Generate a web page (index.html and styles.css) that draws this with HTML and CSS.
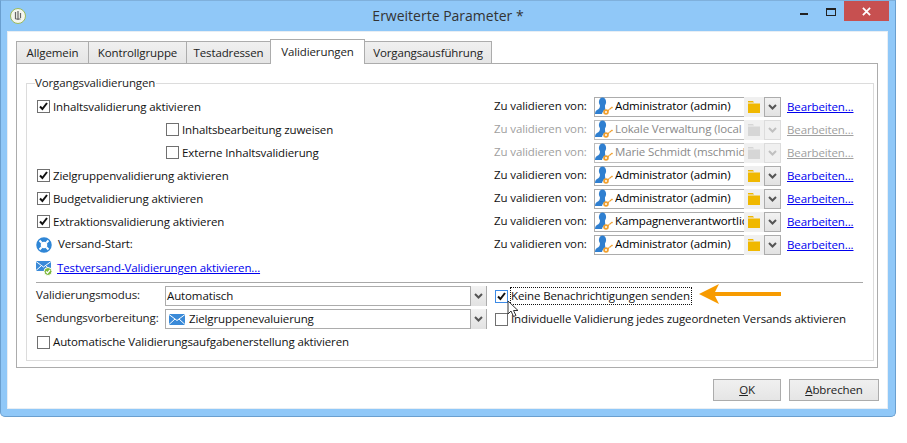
FILE: index.html
```html
<!DOCTYPE html>
<html lang="de">
<head>
<meta charset="utf-8">
<title>Erweiterte Parameter</title>
<link rel="stylesheet" href="styles.css">
</head>
<body>
<svg class="defs" width="0" height="0" aria-hidden="true">
  <defs>
    <symbol id="userkey" viewBox="0 0 18 19">
      <ellipse cx="7.5" cy="5" rx="3.6" ry="4.6" fill="#2f7fd0"/>
      <path d="M5 8 C5 11 4 12 2 13 C0.5 14 0 15.5 0 17 L7 17 C7.5 15 8.5 13.5 10.5 12.5 C10 11 10 10 10 8 Z" fill="#2f7fd0"/>
      <circle cx="11" cy="15" r="2.8" fill="#f0a030"/>
      <circle cx="11" cy="15" r="1" fill="#fff"/>
      <path d="M12.5 13.3 L17 9.5 L18 10.5 L17 11.5 L16.4 11.2 L15.6 12.4 L14.8 12.2 L13.5 14.5 Z" fill="#f0a030"/>
    </symbol>
    <symbol id="folder" viewBox="0 0 12 12">
      <path d="M0 0 H5 L6 1.500 H0 Z M0 2.500 H12 V12 H0 Z" fill="currentColor"/>
    </symbol>
    <symbol id="chev" viewBox="0 0 9 6">
      <path d="M1 1 L4.500 4.500 L8 1" fill="none" stroke="currentColor" stroke-width="2"/>
    </symbol>
    <symbol id="check" viewBox="0 0 13 13">
      <path d="M3 6.500 L5.400 9 L10 3" fill="none" stroke="#111" stroke-width="2"/>
    </symbol>
    <symbol id="mail" viewBox="0 0 16 11">
      <rect width="16" height="11" fill="#3a8ad8"/>
      <path d="M0 0.500 L8 6.500 L16 0.500 M0 10.500 L6 5 M16 10.500 L10 5" fill="none" stroke="#fff" stroke-width="1"/>
    </symbol>
  </defs>
</svg>

<div class="window">
  <header class="titlebar">
    <div class="tb-left">
      <svg class="app-icon" viewBox="0 0 16 16" width="16" height="16">
        <circle cx="8" cy="8" r="7.500" fill="#f4f6ee" stroke="#9cba5a"/>
        <path d="M5.500 4 V11 M8 3 V12 M10.500 5 V10 M5.500 11 H10.500" fill="none" stroke="#666" stroke-width="1.200"/>
      </svg>
    </div>
    <div class="tb-title">Erweiterte Parameter *</div>
    <div class="tb-controls">
      <span class="ctl ctl-min"></span>
      <span class="ctl ctl-max"></span>
      <span class="ctl ctl-close">
        <svg viewBox="0 0 10 10" width="9" height="9"><path d="M1 1 L9 9 M9 1 L1 9" stroke="#fff" stroke-width="2"/></svg>
      </span>
    </div>
  </header>

  <div class="dialog">
    <nav class="tabs">
      <div class="tab t1">Allgemein</div>
      <div class="tab t2">Kontrollgruppe</div>
      <div class="tab t3">Testadressen</div>
      <div class="tab t4 active">Validierungen</div>
      <div class="tab t5">Vorgangsausführung</div>
    </nav>

    <section class="panel">
      <div class="group">
        <div class="legend">Vorgangsvalidierungen</div>

        <div class="row">
          <div class="left"><span class="cb"><svg><use href="#check"/></svg></span><span>Inhaltsvalidierung aktivieren</span></div>
          <div class="approver">
            <span class="ap-label">Zu validieren von:</span>
            <div class="combo"><svg class="uk"><use href="#userkey"/></svg><span class="ctext">Administrator (admin)</span><span class="fold"><svg><use href="#folder"/></svg></span><span class="drop"><svg><use href="#chev"/></svg></span></div>
            <a class="edit" href="#">Bearbeiten...</a>
          </div>
        </div>

        <div class="row">
          <div class="left indent"><span class="cb"></span><span>Inhaltsbearbeitung zuweisen</span></div>
          <div class="approver off">
            <span class="ap-label">Zu validieren von:</span>
            <div class="combo"><svg class="uk"><use href="#userkey"/></svg><span class="ctext">Lokale Verwaltung (local</span><span class="fold"><svg><use href="#folder"/></svg></span><span class="drop"><svg><use href="#chev"/></svg></span></div>
            <a class="edit" href="#">Bearbeiten...</a>
          </div>
        </div>

        <div class="row">
          <div class="left indent"><span class="cb"></span><span>Externe Inhaltsvalidierung</span></div>
          <div class="approver off">
            <span class="ap-label">Zu validieren von:</span>
            <div class="combo"><svg class="uk"><use href="#userkey"/></svg><span class="ctext">Marie Schmidt (mschmid</span><span class="fold"><svg><use href="#folder"/></svg></span><span class="drop"><svg><use href="#chev"/></svg></span></div>
            <a class="edit" href="#">Bearbeiten...</a>
          </div>
        </div>

        <div class="row">
          <div class="left"><span class="cb"><svg><use href="#check"/></svg></span><span>Zielgruppenvalidierung aktivieren</span></div>
          <div class="approver">
            <span class="ap-label">Zu validieren von:</span>
            <div class="combo"><svg class="uk"><use href="#userkey"/></svg><span class="ctext">Administrator (admin)</span><span class="fold"><svg><use href="#folder"/></svg></span><span class="drop"><svg><use href="#chev"/></svg></span></div>
            <a class="edit" href="#">Bearbeiten...</a>
          </div>
        </div>

        <div class="row">
          <div class="left"><span class="cb"><svg><use href="#check"/></svg></span><span>Budgetvalidierung aktivieren</span></div>
          <div class="approver">
            <span class="ap-label">Zu validieren von:</span>
            <div class="combo"><svg class="uk"><use href="#userkey"/></svg><span class="ctext">Administrator (admin)</span><span class="fold"><svg><use href="#folder"/></svg></span><span class="drop"><svg><use href="#chev"/></svg></span></div>
            <a class="edit" href="#">Bearbeiten...</a>
          </div>
        </div>

        <div class="row">
          <div class="left"><span class="cb"><svg><use href="#check"/></svg></span><span>Extraktionsvalidierung aktivieren</span></div>
          <div class="approver">
            <span class="ap-label">Zu validieren von:</span>
            <div class="combo"><svg class="uk"><use href="#userkey"/></svg><span class="ctext">Kampagnenverantwortliche</span><span class="fold"><svg><use href="#folder"/></svg></span><span class="drop"><svg><use href="#chev"/></svg></span></div>
            <a class="edit" href="#">Bearbeiten...</a>
          </div>
        </div>

        <div class="row">
          <div class="left start">
            <svg class="buoy" viewBox="0 0 16 16" width="16" height="16">
              <circle cx="8" cy="8" r="5.500" fill="none" stroke="#2f86d6" stroke-width="4.500"/>
              <path d="M3.500 3.500 L5.700 5.700 M12.500 3.500 L10.300 5.700 M3.500 12.500 L5.700 10.300 M12.500 12.500 L10.300 10.300" stroke="#fff" stroke-width="2"/>
            </svg>
            <span class="ap-up">Versand-Start:</span>
          </div>
          <div class="approver">
            <span class="ap-label">Zu validieren von:</span>
            <div class="combo"><svg class="uk"><use href="#userkey"/></svg><span class="ctext">Administrator (admin)</span><span class="fold"><svg><use href="#folder"/></svg></span><span class="drop"><svg><use href="#chev"/></svg></span></div>
            <a class="edit" href="#">Bearbeiten...</a>
          </div>
        </div>

        <div class="proof">
          <span class="proof-icon">
            <svg viewBox="0 0 18 15" width="18" height="15">
              <rect y="0" width="15" height="10" fill="#3a8ad8"/>
              <path d="M0 0.500 L7.500 6 L15 0.500 M0 9.500 L5 5 M15 9.500 L10 5" fill="none" stroke="#fff"/>
              <circle cx="12" cy="10.500" r="4" fill="#7cb83a" stroke="#fff"/>
              <path d="M10 10.500 L11.500 12 L14 9" fill="none" stroke="#fff" stroke-width="1.200"/>
            </svg>
          </span>
          <a class="edit" href="#">Testversand-Validierungen aktivieren...</a>
        </div>

        <div class="sep"></div>

        <div class="opts">
          <span class="opt-label">Validierungsmodus:</span>
          <div class="select"><span class="s-text">Automatisch</span><span class="drop"><svg><use href="#chev"/></svg></span></div>
          <div class="opt-check"><span class="cb focus"><svg><use href="#check"/></svg></span><span class="focused">Keine Benachrichtigungen senden</span></div>

          <span class="opt-label">Sendungsvorbereitung:</span>
          <div class="select"><svg class="s-mail"><use href="#mail"/></svg><span class="s-text">Zielgruppenevaluierung</span><span class="drop"><svg><use href="#chev"/></svg></span></div>
          <div class="opt-check"><span class="cb"></span><span>Individuelle Validierung jedes zugeordneten Versands aktivieren</span></div>
        </div>

        <div class="auto"><span class="cb"></span><span>Automatische Validierungsaufgabenerstellung aktivieren</span></div>
      </div>
    </section>

    <footer class="actions">
      <button class="btn ok" type="button"><u>O</u>K</button>
      <button class="btn cancel" type="button"><u>A</u>bbrechen</button>
    </footer>
  </div>

  <svg class="callout" viewBox="0 0 82 20" width="82" height="20">
    <path d="M0 10 L20 0 L16 8 H82 V12 H16 L20 20 Z" fill="#f79b00"/>
  </svg>
  <svg class="pointer" viewBox="0 0 13 18" width="13" height="18">
    <path d="M1 1 V14 L4 11 L6.500 16.500 L9 15.500 L6.500 10.500 L11 10.500 Z" fill="#fff" stroke="#333" stroke-width="1"/>
  </svg>
</div>
</body>
</html>
```

FILE: styles.css
```css
* { box-sizing: border-box; }
html, body { margin: 0; padding: 0; background: #fff; }
body {
  width: 907px;
  height: 443px;
  overflow: hidden;
  font-family: "Open Sans", "Noto Sans", sans-serif;
  font-size: 11.5px;
  letter-spacing: -0.12px;
  line-height: 16px;
  color: #111;
}
.defs { position: absolute; }

.window {
  position: relative;
  width: 896px;
  height: 417px;
  background: #90c8f8;
  border: 1px solid #6a9fcf;
  border-top-color: #7fb0dc;
  border-radius: 0 0 5px 5px;
  padding: 0 7px 7px 6px;
}

.titlebar {
  display: grid;
  grid-template-columns: 1fr auto 1fr;
  height: 30px;
  margin: 0 -7px 0 -6px;
}
.tb-left { padding: 7px 0 0 9px; }
.app-icon { display: block; }
.tb-title {
  font-size: 14px;
  letter-spacing: 0;
  line-height: 30px;
  color: #333;
}
.tb-controls { display: flex; justify-content: flex-end; padding-right: 6px; }
.ctl { display: block; }
.ctl-min { width: 8px; height: 2px; background: #222; margin: 12px 18px 0 0; }
.ctl-max { width: 10px; height: 8px; border: 1px solid #222; border-top-width: 2px; margin: 7px 8px 0 0; }
.ctl-close {
  display: flex; align-items: center; justify-content: center;
  width: 45px; height: 20px; background: #c75050;
}

.dialog {
  height: 378px;
  background: #fff;
  border: 1px solid #e8eef4;
  padding: 7px 9px 0 8px;
}

.tabs {
  display: grid;
  grid-template-columns: 72px 98px 84px 94px 128px;
  width: max-content;
  height: 24px;
  align-items: end;
  position: relative;
  z-index: 1;
}
.tab {
  height: 22px;
  border: 1px solid #acacac;
  border-right: 0;
  border-bottom: 0;
  background: linear-gradient(#f0f0f0, #e5e5e5);
  text-align: center;
  line-height: 21px;
  color: #222;
}
.tab.t5 { border-right: 1px solid #acacac; }
.tab.active {
  height: 25px;
  margin-bottom: -1px;
  background: #fff;
  border-right: 1px solid #acacac;
  margin-right: -1px;
  line-height: 24px;
}

.panel {
  height: 305px;
  border: 1px solid #acacac;
  padding: 19px 3px 0 9px;
}
.group {
  height: 278px;
  border: 1px solid #dcdcdc;
  padding: 0 10px 0 9px;
}
.legend {
  width: max-content;
  margin: -9px 0 4px -1px;
  padding: 0 1px 0 0;
  background: #fff;
  color: #222;
}

.row {
  display: grid;
  grid-template-columns: 458px 1fr;
  height: 23px;
  align-items: center;
}
.left { display: flex; align-items: center; padding-left: 1px; }
.left.indent { padding-left: 130px; }
.left.start { padding-left: 0; }
.buoy { margin-right: 6px; }
.ap-up { padding-bottom: 2px; }

.cb {
  flex: none;
  display: block;
  width: 13px;
  height: 13px;
  border: 1px solid #707070;
  background: #fff;
  margin-right: 3px;
}
.cb svg { display: block; width: 13px; height: 13px; margin: -1px; }
.cb.focus { border-color: #3c8ae6; }
.focused { outline: 1px dotted #111; padding-right: 1px; white-space: nowrap; }

.approver { display: flex; align-items: center; }
.ap-label { width: 100px; flex: none; white-space: nowrap; padding-bottom: 2px; }
.combo {
  display: flex;
  align-items: center;
  width: 187px;
  height: 20px;
  border: 1px solid #acacac;
  background: #fff;
  margin-right: 6px;
  color: #000;
}
.uk { flex: none; width: 18px; height: 19px; margin: 0 2px 0 0; }
.ctext { flex: 1; min-width: 0; white-space: nowrap; overflow: hidden; padding-bottom: 2px; }
.fold {
  flex: none;
  align-self: stretch;
  width: 20px;
  margin: -1px 0;
  background: #f0f0f0;
  display: flex;
  align-items: center;
  justify-content: center;
  color: #f0b800;
}
.fold svg { width: 12px; height: 12px; }
.drop {
  flex: none;
  align-self: stretch;
  width: 17px;
  margin: -1px -1px -1px 0;
  background: linear-gradient(#f2f2f2, #e2e2e2);
  border: 1px solid #acacac;
  display: flex;
  align-items: center;
  justify-content: center;
  color: #555;
}
.drop svg { width: 9px; height: 6px; }
.edit { color: #0000ee; text-decoration: underline; white-space: nowrap; }

.off, .off .combo, .off .edit { color: #a0a0a0; }
.off .combo { color: #8a8a8a; border-color: #bdbdbd; }
.off .edit { color: #a0a0a0; }
.off .fold { color: #d6d6d6; }
.off .drop { color: #c0c0c0; border-color: #dcdcdc; background: #f0f0f0; }

.proof { display: flex; align-items: center; height: 22px; margin-top: 1px; }
.proof-icon { width: 21px; flex: none; display: flex; }
.sep { height: 1px; background: #a8a8a8; margin: 3px 0; }

.opts {
  display: grid;
  grid-template-columns: 129px 322px 1fr;
  grid-auto-rows: 20px;
  row-gap: 3px;
  align-items: center;
}
.opt-label { color: #222; margin-top: -2px; white-space: nowrap; }
.select {
  display: flex;
  align-items: center;
  height: 20px;
  border: 1px solid #acacac;
  padding-left: 1px;
}
.s-mail { width: 16px; height: 11px; flex: none; margin: 0 4px 0 2px; }
.s-text { flex: 1; }
.select .drop { width: 16px; border-width: 0 0 0 1px; margin: -1px 0; }
.opt-check { display: flex; align-items: center; padding-left: 8px; white-space: nowrap; }

.auto { display: flex; align-items: center; height: 22px; margin-top: 2px; padding-left: 1px; }

.actions { display: flex; justify-content: flex-end; gap: 8px; margin-right: -1px; padding: 11px 0 0; }
.btn {
  height: 22px;
  border: 1px solid #acacac;
  background: linear-gradient(#f0f0f0, #e5e5e5);
  font: inherit;
  letter-spacing: inherit;
  color: #222;
  padding: 0;
}
.btn.ok { width: 68px; }
.btn.cancel { width: 90px; }

.callout { position: absolute; left: 698px; top: 283px; }
.pointer { position: absolute; left: 506px; top: 299px; }
```
